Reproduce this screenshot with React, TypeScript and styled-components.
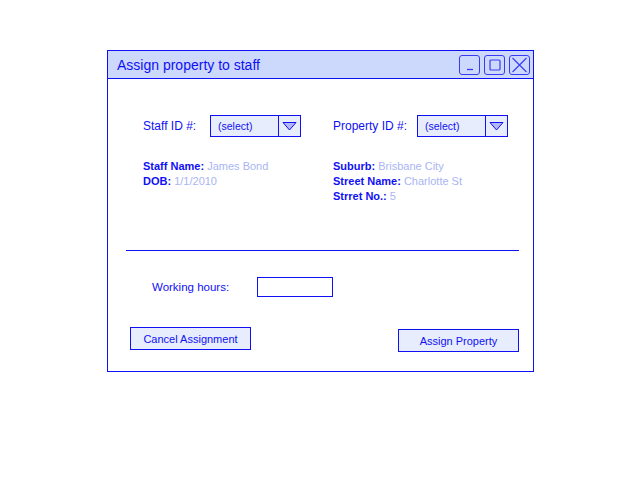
import React from "react";
import styled, { createGlobalStyle } from "styled-components";

const Global = createGlobalStyle`
  html, body { margin: 0; padding: 0; background: #ffffff; }
  body { font-family: "Liberation Sans", Arial, sans-serif; }
`;

const BLUE = "#1010f5";
const FILL = "#cdd8fd";
const LIGHT = "#e7edfd";
const VALUE = "#a9b5f3";

const Page = styled.div`
  width: 640px;
  height: 480px;
  padding: 50px 0 0 107px;
  box-sizing: border-box;
`;

const Window = styled.div`
  width: 427px;
  height: 322px;
  box-sizing: border-box;
  border: 1px solid ${BLUE};
  display: flex;
  flex-direction: column;
`;

const TitleBar = styled.div`
  height: 28px;
  box-sizing: border-box;
  background: ${FILL};
  border-bottom: 1px solid ${BLUE};
  display: flex;
  align-items: center;
  justify-content: space-between;
  padding: 0 3px 0 9px;
`;

const Title = styled.span`
  color: ${BLUE};
  font-size: 14px;
`;

const Controls = styled.div`
  display: flex;
  gap: 4px;
  padding-top: 1px;
`;

const CtrlBtn = styled.div`
  width: 21px;
  height: 20px;
  box-sizing: border-box;
  border: 1px solid #3a3af5;
  border-radius: 3px;
  display: flex;
  align-items: center;
  justify-content: center;
`;

const Content = styled.div`
  flex: 1;
  display: flex;
  flex-direction: column;
  padding-top: 36px;
`;

const Columns = styled.div`
  display: grid;
  grid-template-columns: 190px 1fr;
  margin-left: 35px;
`;

const Column = styled.div`
  display: flex;
  flex-direction: column;
`;

const FieldRow = styled.div`
  display: flex;
  align-items: center;
  height: 22px;
`;

const FieldLabel = styled.span<{ $w: number }>`
  color: ${BLUE};
  font-size: 12px;
  width: ${(p) => p.$w}px;
`;

const Select = styled.div<{ $w: number }>`
  display: flex;
  height: 22px;
  width: ${(p) => p.$w}px;
  box-sizing: border-box;
  border: 1px solid ${BLUE};
  background: ${LIGHT};
`;

const SelectText = styled.div`
  flex: 1;
  font-size: 10.5px;
  color: ${BLUE};
  display: flex;
  align-items: center;
  padding-left: 7px;
`;

const SelectArrow = styled.div`
  width: 21px;
  border-left: 1px solid ${BLUE};
  display: flex;
  align-items: center;
  justify-content: center;
`;

const Info = styled.div`
  margin-top: 22px;
  display: flex;
  flex-direction: column;
`;

const InfoLine = styled.div`
  font-size: 11px;
  line-height: 15px;
  white-space: nowrap;
`;

const Key = styled.span`
  color: ${BLUE};
  font-weight: bold;
`;

const Val = styled.span`
  color: ${VALUE};
`;

const Divider = styled.div`
  margin: 46px 0 0 18px;
  width: 393px;
  height: 1px;
  background: ${BLUE};
`;

const HoursRow = styled.div`
  display: flex;
  align-items: center;
  margin: 26px 0 0 44px;
`;

const HoursLabel = styled.span`
  width: 105px;
  font-size: 11.5px;
  color: ${BLUE};
`;

const Input = styled.div`
  width: 76px;
  height: 20px;
  box-sizing: border-box;
  border: 1px solid ${BLUE};
  background: #ffffff;
`;

const ButtonRow = styled.div`
  display: flex;
  justify-content: space-between;
  align-items: flex-start;
  margin-top: 30px;
  padding: 0 14px 0 22px;
`;

const Button = styled.div<{ $offset?: number }>`
  width: 121px;
  height: 23px;
  box-sizing: border-box;
  margin-top: ${(p) => p.$offset ?? 0}px;
  border: 1px solid ${BLUE};
  background: ${LIGHT};
  color: ${BLUE};
  font-size: 11px;
  display: flex;
  align-items: center;
  justify-content: center;
`;

const Arrow = () => (
  <svg width="15" height="10" viewBox="0 0 15 10">
    <path d="M1 1.5 L14 1.5 L7.5 9 Z" fill="#b3b6f7" stroke={BLUE} strokeWidth="1" strokeLinejoin="round" />
  </svg>
);

export default function App() {
  return (
    <>
      <Global />
      <Page>
        <Window>
          <TitleBar>
            <Title>Assign property to staff</Title>
            <Controls>
              <CtrlBtn>
                <svg width="14" height="14" viewBox="0 0 14 14">
                  <path d="M4 11.5 L10 11.5" stroke="#3a3af5" strokeWidth="1.3" />
                </svg>
              </CtrlBtn>
              <CtrlBtn>
                <svg width="14" height="14" viewBox="0 0 14 14">
                  <rect x="2" y="2" width="10" height="10" rx="1" fill="none" stroke="#3a3af5" strokeWidth="1.2" />
                </svg>
              </CtrlBtn>
              <CtrlBtn>
                <svg width="17" height="16" viewBox="0 0 17 16">
                  <path d="M1.5 1 L15.5 15 M15.5 1 L1.5 15" stroke="#3a3af5" strokeWidth="1.1" />
                </svg>
              </CtrlBtn>
            </Controls>
          </TitleBar>
          <Content>
            <Columns>
              <Column>
                <FieldRow>
                  <FieldLabel $w={67}>Staff ID #:</FieldLabel>
                  <Select $w={91}>
                    <SelectText>(select)</SelectText>
                    <SelectArrow>
                      <Arrow />
                    </SelectArrow>
                  </Select>
                </FieldRow>
                <Info>
                  <InfoLine>
                    <Key>Staff Name:</Key> <Val>James Bond</Val>
                  </InfoLine>
                  <InfoLine>
                    <Key>DOB:</Key> <Val>1/1/2010</Val>
                  </InfoLine>
                </Info>
              </Column>
              <Column>
                <FieldRow>
                  <FieldLabel $w={84}>Property ID #:</FieldLabel>
                  <Select $w={91}>
                    <SelectText>(select)</SelectText>
                    <SelectArrow>
                      <Arrow />
                    </SelectArrow>
                  </Select>
                </FieldRow>
                <Info>
                  <InfoLine>
                    <Key>Suburb:</Key> <Val>Brisbane City</Val>
                  </InfoLine>
                  <InfoLine>
                    <Key>Street Name:</Key> <Val>Charlotte St</Val>
                  </InfoLine>
                  <InfoLine>
                    <Key>Strret No.:</Key> <Val>5</Val>
                  </InfoLine>
                </Info>
              </Column>
            </Columns>
            <Divider />
            <HoursRow>
              <HoursLabel>Working hours:</HoursLabel>
              <Input />
            </HoursRow>
            <ButtonRow>
              <Button>Cancel Assignment</Button>
              <Button $offset={2}>Assign Property</Button>
            </ButtonRow>
          </Content>
        </Window>
      </Page>
    </>
  );
}
